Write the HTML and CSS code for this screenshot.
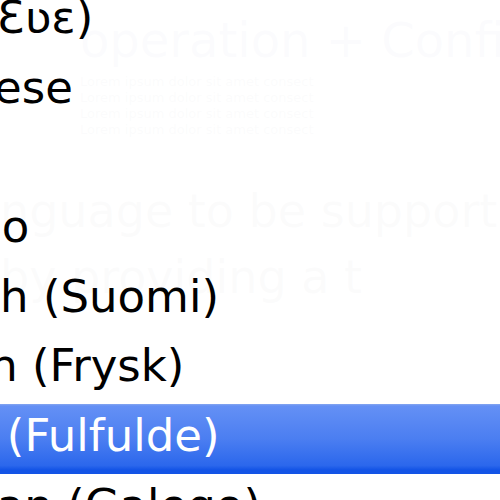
FILE: index.html
```html
<!DOCTYPE html>
<html>
<head>
<meta charset="utf-8">
<link rel="stylesheet" href="styles.css">
</head>
<body>
<div class="page">
  <div class="bg-title">operation + Configu</div>
  <div class="bg-small">
    <div>Lorem ipsum dolor sit amet consect</div>
    <div>Lorem ipsum dolor sit amet consect</div>
    <div>Lorem ipsum dolor sit amet consect</div>
    <div>Lorem ipsum dolor sit amet consect</div>
  </div>
  <div class="bg-line first">nguage to be support</div>
  <div class="bg-line">by providing a t</div>
</div>
<ul class="menu">
  <li class="item">Ewe (Ɛʋɛ)</li>
  <li class="item">Faeroese</li>
  <li class="item">Fijian</li>
  <li class="item">Filipino</li>
  <li class="item">Finnish (Suomi)</li>
  <li class="item">Frisian (Frysk)</li>
  <li class="item selected">Fulah (Fulfulde)</li>
  <li class="item">Galician (Galego)</li>
</ul>
</body>
</html>
```

FILE: styles.css
```css
html, body {
  margin: 0;
  padding: 0;
  width: 500px;
  height: 500px;
  overflow: hidden;
  background: #ffffff;
}

.page {
  position: relative;
  font-family: "DejaVu Sans", sans-serif;
  color: #b0bcd0;
  padding: 10px 0 0 80px;
}

.bg-title {
  font-size: 48px;
  line-height: 60px;
  white-space: nowrap;
}

.bg-small {
  font-size: 13px;
  line-height: 16px;
  color: #b9bcc2;
  padding-top: 4px;
  white-space: nowrap;
}

.bg-line {
  font-size: 46px;
  line-height: 66px;
  margin-left: -80px;
  color: #b5b8be;
  white-space: nowrap;
}

.bg-line.first {
  margin-top: 40px;
}

.menu {
  position: absolute;
  left: -160px;
  top: -14px;
  margin: 0;
  padding: 0;
  list-style: none;
  width: 700px;
  font-family: "DejaVu Sans", sans-serif;
  font-size: 45px;
  color: #000;
  background: rgba(255, 255, 255, 0.94);
}

.item {
  height: 69.7px;
  line-height: 64px;
  padding-left: 32px;
  white-space: nowrap;
  box-sizing: border-box;
}

.item.selected {
  color: #ffffff;
  background: linear-gradient(to bottom, #86a6ef 0, #6490f5 2px, #4b7ef1 50%, #2b67ec 88%, #1354e6 94%, #1354e6 100%);
}
```
